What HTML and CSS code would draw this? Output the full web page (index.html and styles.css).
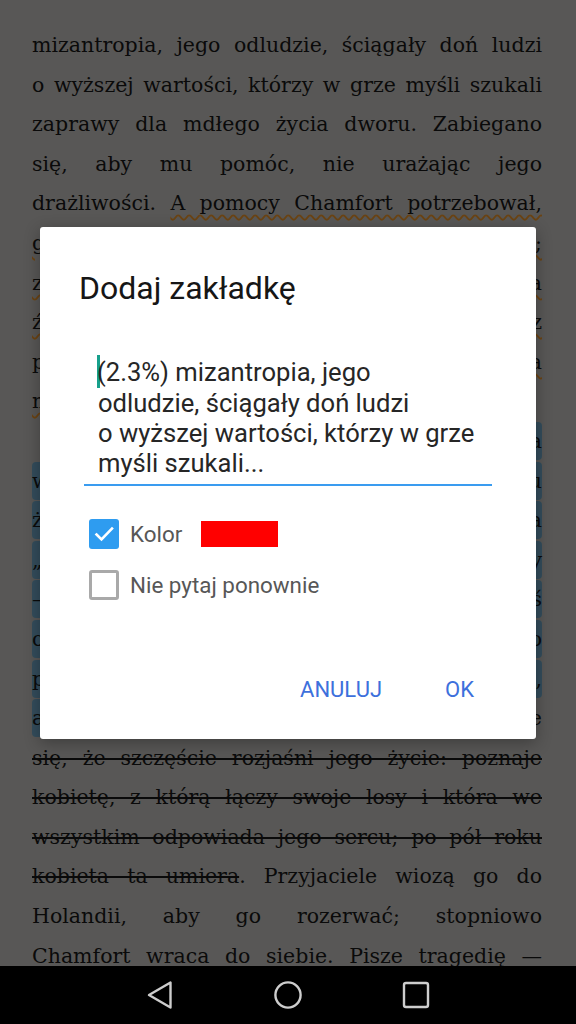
FILE: index.html
```html
<!DOCTYPE html>
<html lang="pl">
<head>
<meta charset="utf-8">
<title>Dodaj zakładkę</title>
<link rel="stylesheet" href="styles.css">
</head>
<body>
<div class="screen">
  <div class="reader">
    <div class="page">
      <div class="ln">mizantropia, jego odludzie, ściągały doń ludzi</div>
      <div class="ln">o wyższej wartości, którzy w grze myśli szukali</div>
      <div class="ln">zaprawy dla mdłego życia dworu. Zabiegano</div>
      <div class="ln">się, aby mu pomóc, nie urażając jego</div>
      <div class="ln">drażliwości. <span class="wavy">A pomocy Chamfort potrzebował,</span></div>
      <div class="ln"><span class="wavy">gdyż zdrowie jego słabło z roku na rok;</span></div>
      <div class="ln"><span class="wavy">zyskał wreszcie pensję i miejsce sekretarza</span></div>
      <div class="ln"><span class="wavy">źródło dochodów, co mu pozwalało żyć bez</span></div>
      <div class="ln"><span class="wavy">pracy na zamówienie. Zdawało się, że troska</span></div>
      <div class="ln last"><span class="wavy">nie odstąpi go już nigdy.</span></div>
      <div class="ln indent">Około 1781 <span class="hl">zdawało się, że dola</span></div>
      <div class="ln"><span class="hl">wreszcie mu sprzyja; wybór do Akademii mu</span></div>
      <div class="ln"><span class="hl">żywo pochlebił, była to dlań nagroda</span></div>
      <div class="ln"><span class="hl">„za tyle lat trudu”. Dni złe minęły</span></div>
      <div class="ln"><span class="hl">— przez krótki czas zdawał się mieć coś</span></div>
      <div class="ln"><span class="hl">od życia więcej. Długo wahał się, czy to</span></div>
      <div class="ln"><span class="hl">przyjąć, ale uległ namowom przyjaciół,</span></div>
      <div class="ln"><span class="hl">a nawet sam uwierzył w swą gwiazdę</span>. Wydaje</div>
      <div class="ln"><span class="strike">się, że szczęście rozjaśni jego życie: poznaje</span></div>
      <div class="ln"><span class="strike">kobietę, z którą łączy swoje losy i która we</span></div>
      <div class="ln"><span class="strike">wszystkim odpowiada jego sercu; po pół roku</span></div>
      <div class="ln"><span class="strike">kobieta ta umiera</span>. Przyjaciele wiozą go do</div>
      <div class="ln">Holandii, aby go rozerwać; stopniowo</div>
      <div class="ln">Chamfort wraca do siebie. Pisze tragedię —</div>
    </div>
    <div class="scrim">
      <div class="dialog">
        <h1 class="dlg-title">Dodaj zakładkę</h1>
        <div class="field">
          <div class="field-line"><span class="caret"></span>(2.3%) mizantropia, jego</div>
          <div class="field-line">odludzie, ściągały doń ludzi</div>
          <div class="field-line">o wyższej wartości, którzy w grze</div>
          <div class="field-line">myśli szukali...</div>
        </div>
        <div class="opts">
          <div class="opt">
            <span class="cb cb-on"><svg viewBox="0 0 30 30" width="30" height="30"><path d="M7.5 15.5 L12.5 20.5 L23 9.5" fill="none" stroke="#fff" stroke-width="2.6" stroke-linecap="square" stroke-linejoin="miter"/></svg></span>
            <span class="opt-label">Kolor</span>
            <span class="swatch"></span>
          </div>
          <div class="opt">
            <span class="cb cb-off"></span>
            <span class="opt-label">Nie pytaj ponownie</span>
          </div>
        </div>
        <div class="actions">
          <button class="btn">ANULUJ</button>
          <button class="btn">OK</button>
        </div>
      </div>
    </div>
  </div>
  <nav class="navbar">
    <span class="nav-ic"><svg viewBox="0 0 40 40" width="40" height="40"><path d="M9 20 L30.5 7.5 L30.5 32.5 Z" fill="none" stroke="#cdcdcd" stroke-width="2.4" stroke-linejoin="round"/></svg></span>
    <span class="nav-ic"><svg viewBox="0 0 40 40" width="40" height="40"><circle cx="20" cy="20" r="12.6" fill="none" stroke="#cdcdcd" stroke-width="2.4"/></svg></span>
    <span class="nav-ic"><svg viewBox="0 0 40 40" width="40" height="40"><rect x="8" y="8" width="24" height="24" rx="2" fill="none" stroke="#cdcdcd" stroke-width="2.4"/></svg></span>
  </nav>
</div>
</body>
</html>
```

FILE: styles.css
```css
* { box-sizing: border-box; }
html, body { margin: 0; padding: 0; }
body { background: #000; }

.screen {
  width: 576px;
  height: 1024px;
  display: flex;
  flex-direction: column;
  overflow: hidden;
}

.reader {
  position: relative;
  flex: 1;
  overflow: hidden;
  background: #c9c7c3;
}

.page {
  padding: 26px 34px 0 32px;
  font-family: "DejaVu Serif", "Liberation Serif", serif;
  font-size: 20.5px;
  line-height: 39.6px;
  color: #181818;
}

.ln {
  white-space: nowrap;
  text-align: justify;
  text-align-last: justify;
}
.ln.last { text-align-last: left; }
.ln.indent { padding-left: 40px; }

.wavy {
  text-decoration: underline wavy #f29a2e;
  text-decoration-thickness: 1.6px;
  text-underline-offset: 4px;
}

.hl {
  background: #74aed0;
  border-radius: 4px;
  padding: 7px 0;
  -webkit-box-decoration-break: clone;
  box-decoration-break: clone;
}

.strike {
  text-decoration: line-through #181818;
  text-decoration-thickness: 1.6px;
}

.scrim {
  position: absolute;
  inset: 0;
  background: rgba(0, 0, 0, 0.56);
  display: flex;
  align-items: center;
  justify-content: center;
}

.dialog {
  width: 496px;
  background: #fff;
  border-radius: 3px;
  font-family: Roboto, "Noto Sans", sans-serif;
  padding-bottom: 26px;
  box-shadow: 0 4px 16px rgba(0,0,0,0.3);
}

.dlg-title {
  margin: 0;
  padding: 42px 40px 0 39px;
  font-size: 32px;
  line-height: 38px;
  font-weight: 400;
  color: #161616;
}

.field {
  margin: 34px 44px 0 44px;
  padding: 14px 10px 6px 14px;
  border-bottom: 2px solid #3a9cf0;
  font-size: 25.6px;
  line-height: 30.3px;
  color: #262626;
}
.field-line { white-space: nowrap; }

.caret {
  display: inline-block;
  width: 3px;
  height: 33px;
  margin-right: -3px;
  margin-left: -1px;
  background: #17a08c;
  vertical-align: -7px;
}

.opts {
  margin: 33px 0 0 49px;
  display: flex;
  flex-direction: column;
  gap: 21px;
}

.opt {
  display: flex;
  align-items: center;
  height: 30px;
}

.cb {
  width: 30px;
  height: 30px;
  border-radius: 3px;
  flex: none;
  display: flex;
}
.cb-on { background: #2e9cf0; }
.cb-off { border: 3px solid #a9a9a9; }

.opt-label {
  margin-left: 11px;
  font-size: 22.4px;
  color: #575757;
}

.swatch {
  width: 77px;
  height: 26px;
  background: #ff0000;
  margin-left: 19px;
}

.actions {
  margin-top: 65px;
  display: flex;
  justify-content: flex-end;
  gap: 31px;
  padding-right: 46px;
}

.btn {
  border: 0;
  background: none;
  height: 48px;
  padding: 0 16px;
  font-family: Roboto, "Noto Sans", sans-serif;
  font-size: 22px;
  font-weight: 400;
  color: #3d70dc;
}

.navbar {
  height: 58px;
  flex: none;
  background: #000;
  display: flex;
  align-items: center;
  justify-content: center;
  gap: 88px;
}
.nav-ic { width: 40px; height: 40px; display: flex; }
```
